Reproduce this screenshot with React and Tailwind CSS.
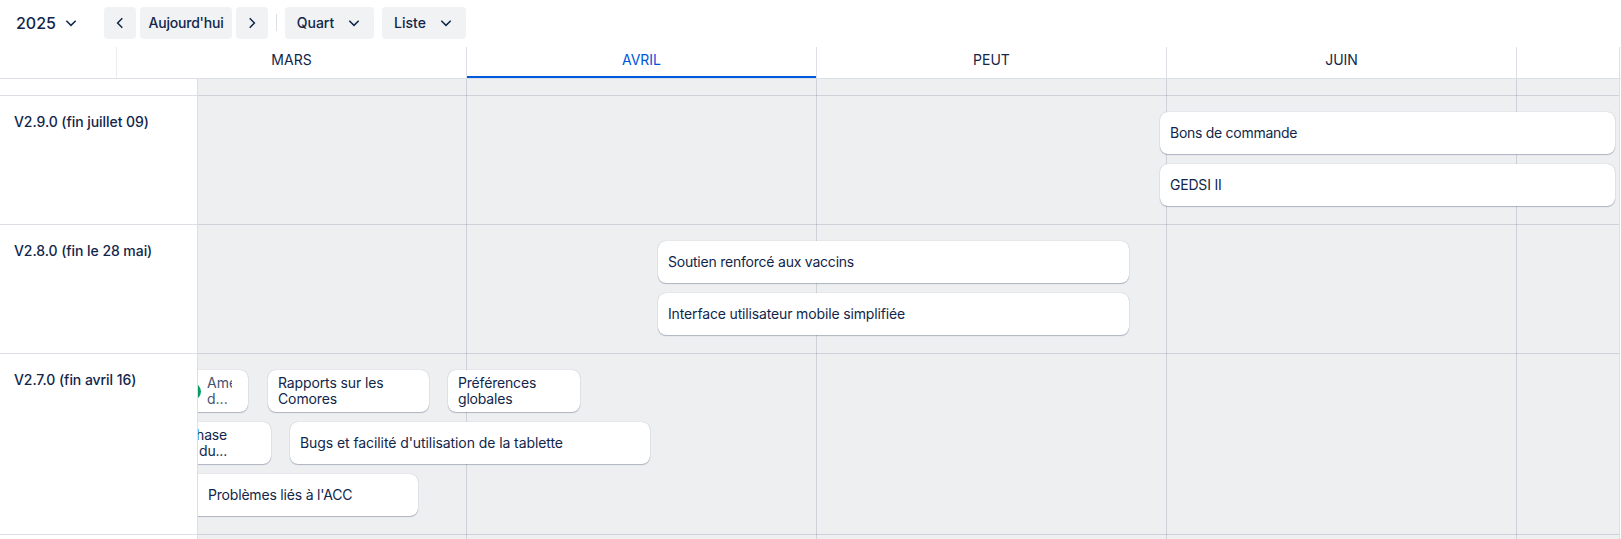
const months = [
  { name: "", cls: "w-[117px] border-[#ebecf0]" },
  { name: "MARS", cls: "w-[350px] border-[#dcdfe4]" },
  { name: "AVRIL", cls: "w-[350px] border-[#dcdfe4]", active: true },
  { name: "PEUT", cls: "w-[350px] border-[#dcdfe4]" },
  { name: "JUIN", cls: "w-[350px] border-[#dcdfe4]" },
  { name: "", cls: "w-[103px] border-[#dcdfe4]" },
];

const groups = [
  {
    label: "V2.9.0 (fin juillet 09)",
    height: "h-[129px]",
    lanes: [
      [{ text: "Bons de commande", cls: "ml-[962px] w-[455px] tracking-[-0.28px]" }],
      [{ text: "GEDSI II", cls: "ml-[962px] w-[455px] tracking-[-0.2px]" }],
    ],
  },
  {
    label: "V2.8.0 (fin le 28 mai)",
    height: "h-[129px]",
    lanes: [
      [{ text: "Soutien renforcé aux vaccins", cls: "ml-[460px] w-[471px] tracking-[-0.22px]" }],
      [{ text: "Interface utilisateur mobile simplifiée", cls: "ml-[460px] w-[471px] tracking-[-0.15px]" }],
    ],
  },
  {
    label: "V2.7.0 (fin avril 16)",
    height: "h-[181px]",
    lanes: [
      [
        { done: true, cls: "-ml-[24px] w-[74px]" },
        { text: "Rapports sur les Comores", cls: "ml-[20px] w-[161px] pr-9 tracking-[-0.12px]" },
        { text: "Préférences globales", cls: "ml-[19px] w-[132px] pr-9 tracking-[-0.18px]" },
      ],
      [
        { phase: true, cls: "-ml-[30px] w-[103px] tracking-[-0.2px]" },
        { text: "Bugs et facilité d'utilisation de la tablette", cls: "ml-[19px] w-[360px] tracking-[-0.08px]" },
      ],
      [{ text: "Problèmes liés à l'ACC", cls: "-ml-[20px] w-[240px] pl-[30px] tracking-[-0.19px]" }],
    ],
  },
];

function Chevron({ d = "M3.300 5.700 8 10.400l4.700-4.700" }) {
  return (
    <svg viewBox="0 0 16 16" className="size-4 shrink-0" fill="none" stroke="currentColor" strokeWidth="1.5">
      <path d={d} />
    </svg>
  );
}

function Card({ card }) {
  return (
    <div
      className={`flex h-[42px] shrink-0 items-center overflow-hidden rounded-lg bg-white px-2.5 text-sm leading-4 shadow-[0_1px_1px_rgba(9,30,66,0.25),0_0_1px_rgba(9,30,66,0.31)] ${card.cls}`}
    >
      {card.done && (
        <>
          <span className="mr-1.5 size-[17px] shrink-0 rounded-full bg-[#049c63]" />
          <span className="w-[25px] shrink-0 overflow-hidden whitespace-nowrap text-[#44546f]">
            Ame
            <br />
            d...
          </span>
        </>
      )}
      {card.phase && (
        <span className="w-[49px] whitespace-nowrap text-right">
          Phase
          <br />
          du...
        </span>
      )}
      {card.text && <span>{card.text}</span>}
    </div>
  );
}

function Toolbar() {
  const button = "flex h-8 items-center justify-center rounded bg-[#f1f2f4]";
  return (
    <div className="flex h-[47px] shrink-0 items-start pt-[7px] text-sm font-medium">
      <button className="ml-4 flex h-8 w-[88px] items-center gap-[7px] text-base font-medium">
        2025
        <Chevron />
      </button>
      <button className={`${button} w-8`}>
        <Chevron d="M10.300 3.300 5.600 8l4.700 4.700" />
      </button>
      <button className={`${button} ml-1 w-[92px] tracking-[-0.2px]`}>Aujourd'hui</button>
      <button className={`${button} ml-1 w-8`}>
        <Chevron d="M5.700 3.300 10.400 8l-4.700 4.700" />
      </button>
      <span className="ml-2 mt-[7px] h-[17px] w-px bg-[#dcdfe4]" />
      <button className={`${button} ml-2 w-[89px] gap-3`}>
        Quart
        <Chevron />
      </button>
      <button className={`${button} ml-2 w-[84px] gap-3`}>
        Liste
        <Chevron />
      </button>
    </div>
  );
}

export default function App() {
  return (
    <div className="flex h-[539px] w-[1621px] flex-col overflow-hidden bg-white font-[Inter,sans-serif] text-[#11264a]">
      <Toolbar />
      <div className="flex h-8 shrink-0 border-b border-[#dcdfe4]">
        {months.map((m, i) => (
          <div
            key={i}
            className={`flex h-[31px] shrink-0 justify-center border-r pt-[3px] text-sm ${m.cls} ${
              m.active ? "text-[#0055dc] shadow-[inset_0_-2px_0_#0058dc]" : ""
            }`}
          >
            {m.name}
          </div>
        ))}
      </div>
      <div className="flex grow">
        <div className="w-[198px] shrink-0 border-r border-[#dcdfe4]">
          <div className="h-[17px] border-b border-[#dcdfe4]" />
          {groups.map((g) => (
            <div
              key={g.label}
              className={`border-b border-[#dcdfe4] pl-3.5 pt-4 text-sm font-medium tracking-[-0.06px] ${g.height}`}
            >
              {g.label}
            </div>
          ))}
        </div>
        <div className="relative w-[1422px] shrink-0 overflow-hidden border-r border-[#dcdfe4] bg-[#eeeff1]">
          <div className="absolute inset-0 flex">
            <div className="w-[269px] border-r border-[#091e4224]" />
            <div className="w-[350px] border-r border-[#091e4224]" />
            <div className="w-[350px] border-r border-[#091e4224]" />
            <div className="w-[350px] border-r border-[#091e4224]" />
          </div>
          <div className="relative">
            <div className="h-[17px] border-b border-[#091e4224]" />
            {groups.map((g) => (
              <div key={g.label} className={`flex flex-col gap-2.5 border-b border-[#091e4224] pt-4 ${g.height}`}>
                {g.lanes.map((lane, i) => (
                  <div key={i} className="flex">
                    {lane.map((card, j) => (
                      <Card key={j} card={card} />
                    ))}
                  </div>
                ))}
              </div>
            ))}
          </div>
        </div>
      </div>
    </div>
  );
}
